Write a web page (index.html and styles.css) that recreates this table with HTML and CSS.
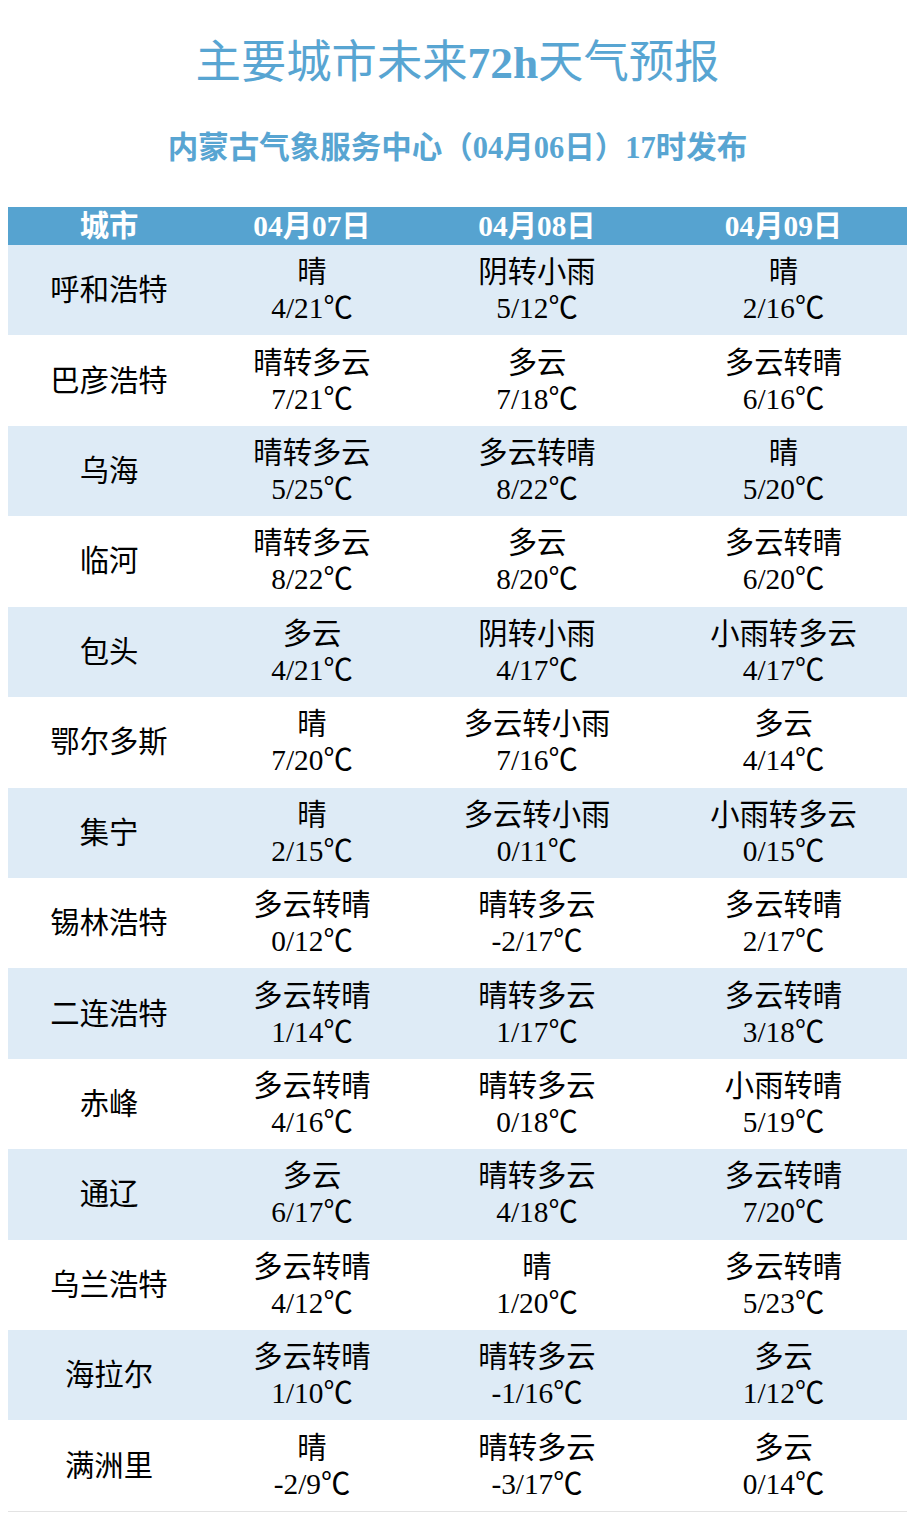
FILE: index.html
```html
<!DOCTYPE html>
<html lang="zh-CN">
<head>
<meta charset="utf-8">
<title>主要城市未来72h天气预报</title>
<link rel="stylesheet" href="styles.css">
</head>
<body>
<div class="page">
  <h1 class="title">主要城市未来<b>72h</b>天气预报</h1>
  <h2 class="subtitle">内蒙古气象服务中心（04月06日）17时发布</h2>
  <table class="forecast">
    <colgroup>
      <col class="c-city"><col class="c-d1"><col class="c-d2"><col class="c-d3">
    </colgroup>
    <thead>
      <tr><th>城市</th><th>04月07日</th><th>04月08日</th><th>04月09日</th></tr>
    </thead>
    <tbody>
      <tr><td>呼和浩特</td><td>晴<br>4/21℃</td><td>阴转小雨<br>5/12℃</td><td>晴<br>2/16℃</td></tr>
      <tr><td>巴彦浩特</td><td>晴转多云<br>7/21℃</td><td>多云<br>7/18℃</td><td>多云转晴<br>6/16℃</td></tr>
      <tr><td>乌海</td><td>晴转多云<br>5/25℃</td><td>多云转晴<br>8/22℃</td><td>晴<br>5/20℃</td></tr>
      <tr><td>临河</td><td>晴转多云<br>8/22℃</td><td>多云<br>8/20℃</td><td>多云转晴<br>6/20℃</td></tr>
      <tr><td>包头</td><td>多云<br>4/21℃</td><td>阴转小雨<br>4/17℃</td><td>小雨转多云<br>4/17℃</td></tr>
      <tr><td>鄂尔多斯</td><td>晴<br>7/20℃</td><td>多云转小雨<br>7/16℃</td><td>多云<br>4/14℃</td></tr>
      <tr><td>集宁</td><td>晴<br>2/15℃</td><td>多云转小雨<br>0/11℃</td><td>小雨转多云<br>0/15℃</td></tr>
      <tr><td>锡林浩特</td><td>多云转晴<br>0/12℃</td><td>晴转多云<br>-2/17℃</td><td>多云转晴<br>2/17℃</td></tr>
      <tr><td>二连浩特</td><td>多云转晴<br>1/14℃</td><td>晴转多云<br>1/17℃</td><td>多云转晴<br>3/18℃</td></tr>
      <tr><td>赤峰</td><td>多云转晴<br>4/16℃</td><td>晴转多云<br>0/18℃</td><td>小雨转晴<br>5/19℃</td></tr>
      <tr><td>通辽</td><td>多云<br>6/17℃</td><td>晴转多云<br>4/18℃</td><td>多云转晴<br>7/20℃</td></tr>
      <tr><td>乌兰浩特</td><td>多云转晴<br>4/12℃</td><td>晴<br>1/20℃</td><td>多云转晴<br>5/23℃</td></tr>
      <tr><td>海拉尔</td><td>多云转晴<br>1/10℃</td><td>晴转多云<br>-1/16℃</td><td>多云<br>1/12℃</td></tr>
      <tr><td>满洲里</td><td>晴<br>-2/9℃</td><td>晴转多云<br>-3/17℃</td><td>多云<br>0/14℃</td></tr>
    </tbody>
  </table>
</div>
</body>
</html>
```

FILE: styles.css
```css
html, body {
  margin: 0;
  padding: 0;
  background: #ffffff;
}

body {
  margin: 8px;
  font-family: "Liberation Serif", "Noto Sans CJK SC", serif;
  color: #000000;
}

.page {
  display: flex;
  flex-direction: column;
  align-items: stretch;
}

.title {
  margin: 25px 0 0 0;
  height: 60px;
  line-height: 60px;
  text-align: center;
  font-size: 45.33px;
  font-weight: normal;
  color: #58a5d2;
}

.title b {
  font-weight: bold;
}

.subtitle {
  margin: 35px 0 0 0;
  height: 40px;
  line-height: 40px;
  text-align: center;
  font-size: 30.5px;
  font-weight: bold;
  color: #58a5d2;
}

.forecast {
  margin-top: 39px;
  width: 899px;
  border-collapse: collapse;
  border-spacing: 0;
  table-layout: fixed;
  font-size: 29.33px;
}

.c-city { width: 202px; }
.c-d1 { width: 204px; }
.c-d2 { width: 246px; }
.c-d3 { width: 247px; }

.forecast th {
  height: 38px;
  padding: 0;
  background: #56a3d0;
  color: #ffffff;
  font-weight: bold;
  line-height: 38px;
  text-align: center;
}

.forecast td {
  height: 90.43px;
  padding: 0;
  text-align: center;
  vertical-align: middle;
  line-height: 36px;
  font-weight: normal;
}

.forecast tbody tr:nth-child(odd) td {
  background: #deebf6;
}

.forecast tbody tr:nth-child(even) td {
  background: #ffffff;
}

.forecast tbody tr:last-child td {
  border-bottom: 1px solid #e3e3e3;
}
```
